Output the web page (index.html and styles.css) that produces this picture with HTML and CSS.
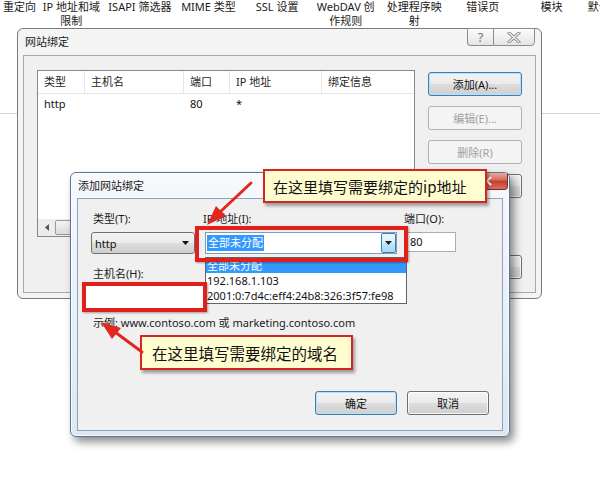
FILE: index.html
```html
<!DOCTYPE html>
<html lang="zh-CN">
<head>
<meta charset="utf-8">
<title>网站绑定</title>
<link rel="stylesheet" href="styles.css">
</head>
<body>
<div class="toolbar">
  <div class="tb tb-first">重定向</div>
  <div class="tb">IP 地址和域<br>限制</div>
  <div class="tb">ISAPI 筛选器</div>
  <div class="tb">MIME 类型</div>
  <div class="tb">SSL 设置</div>
  <div class="tb">WebDAV 创<br>作规则</div>
  <div class="tb">处理程序映<br>射</div>
  <div class="tb">错误页</div>
  <div class="tb">模块</div>
  <div class="tb tb-last">默认文档</div>
</div>
<div class="rule"></div>

<div class="win1">
  <div class="win1-bar">
    <div class="win-title">网站绑定</div>
    <div class="capbtns">
      <div class="cap cap-help">?</div>
      <div class="cap cap-close">
        <svg width="14" height="11" viewBox="0 0 14 11"><path d="M2 1 L12 10 M12 1 L2 10" stroke="#7b7b7b" stroke-width="3" stroke-linecap="round"/><path d="M2 1 L12 10 M12 1 L2 10" stroke="#fafafa" stroke-width="1.2" stroke-linecap="round"/></svg>
      </div>
    </div>
  </div>
  <div class="win1-client">
    <div class="listview">
      <div class="lv-head">
        <div class="c1">类型</div><div class="c2">主机名</div><div class="c3">端口</div><div class="c4">IP 地址</div><div class="c5">绑定信息</div>
      </div>
      <div class="lv-row">
        <div class="c1">http</div><div class="c2"></div><div class="c3">80</div><div class="c4">*</div><div class="c5"></div>
      </div>
      <div class="lv-spacer"></div>
      <div class="hscroll">
        <div class="hs-btn"><svg width="4" height="7" viewBox="0 0 4 7"><path d="M4 0 L0 3.5 L4 7 Z" fill="#555"/></svg></div>
        <div class="hs-thumb"></div>
      </div>
    </div>
    <div class="btncol">
      <div class="btn btn-default">添加(A)...</div>
      <div class="btn btn-disabled">编辑(E)...</div>
      <div class="btn btn-disabled">删除(R)</div>
      <div class="btn"></div>
      <div class="btn btn-bottom"></div>
    </div>
  </div>
</div>

<div class="win2">
  <div class="win2-bar">
    <div class="win-title">添加网站绑定</div>
    <div class="close-red">
      <svg width="12" height="10" viewBox="0 0 12 10"><path d="M2 1 L10 9 M10 1 L2 9" stroke="#fff" stroke-width="2"/></svg>
    </div>
  </div>
  <div class="win2-client">
    <div class="row1">
      <div class="fg fg1">
        <div class="lbl lbl-in">类型(T):</div>
        <div class="combo">http
          <svg class="caret" width="7" height="4" viewBox="0 0 7 4"><path d="M0 0 H7 L3.5 4 Z" fill="#111"/></svg>
        </div>
      </div>
      <div class="fg fg2">
        <div class="lbl">IP 地址(I):</div>
        <div class="ip-combo"><span class="sel-text">全部未分配</span>
          <div class="dd-btn"><svg width="7" height="4" viewBox="0 0 7 4"><path d="M0 0 H7 L3.5 4 Z" fill="#222"/></svg></div>
        </div>
      </div>
      <div class="fg fg3">
        <div class="lbl">端口(O):</div>
        <div class="port">80</div>
      </div>
    </div>
    <div class="lbl-host">主机名(H):</div>
    <div class="host-input"></div>
    <div class="example">示例: www.contoso.com 或 marketing.contoso.com</div>
    <div class="okrow">
      <div class="btn btn-default btn-dlg">确定</div>
      <div class="btn btn-dlg">取消</div>
    </div>
  </div>
</div>

<div class="dropdown">
  <div class="dd-item dd-hi">全部未分配</div>
  <div class="dd-item">192.168.1.103</div>
  <div class="dd-item">2001:0:7d4c:eff4:24b8:326:3f57:fe98</div>
</div>

<div class="redbox rb-ip"></div>
<div class="redbox rb-host"></div>

<div class="callout co-ip">在这里填写需要绑定的ip地址</div>
<div class="callout co-host">在这里填写需要绑定的域名</div>

<svg class="arrows" width="600" height="482" viewBox="0 0 600 482">
  <line x1="251" y1="183" x2="219" y2="213" stroke="#e0281f" stroke-width="3" stroke-linecap="round"/>
  <polygon points="207,225 226,216 216,206" fill="#e0281f"/>
  <line x1="142" y1="352" x2="115" y2="332" stroke="#e0281f" stroke-width="3" stroke-linecap="round"/>
  <polygon points="101,322 121,328 112,339" fill="#e0281f"/>
</svg>
</body>
</html>
```

FILE: styles.css
```css
* { box-sizing: border-box; }

body {
  margin: 0;
  width: 600px;
  height: 482px;
  overflow: hidden;
  position: relative;
  background: #fff;
  font-family: "Noto Sans", "Noto Sans CJK SC", sans-serif;
  font-size: 11px;
  color: #111;
}

/* top feature strip */
.toolbar { display: flex; height: 28px; overflow: hidden; }
.tb {
  flex: 0 0 68.6px;
  text-align: center;
  line-height: 14px;
  white-space: nowrap;
  color: #1a1a1a;
}
.tb-first { flex-basis: 37px; text-align: left; padding-left: 3px; }
.tb-last { flex-basis: 40px; text-align: left; padding-left: 2px; }
.rule { margin-top: 85px; height: 1px; background: #cad5e1; }

/* dialog 1 */
.win1 {
  position: absolute;
  left: 17px; top: 28px;
  width: 525px; height: 271px;
  border: 1px solid #7a7a7a;
  border-radius: 6px;
  background: #f4f4f4;
  display: flex;
  flex-direction: column;
}
.win1-bar { display: flex; height: 26px; align-items: flex-start; }
.win-title { flex: 1; padding-left: 7px; line-height: 26px; color: #1a1a1a; }
.capbtns { display: flex; margin-top: -1px; margin-right: 6px; }
.cap {
  height: 18px;
  border: 1px solid #8c8c8c;
  background: linear-gradient(#fdfdfd, #e4e4e4);
  display: flex; align-items: center; justify-content: center;
  color: #777;
  font-size: 13px;
  line-height: 1;
}
.cap-help { width: 26px; border-right: none; border-radius: 0 0 0 4px; }
.cap-close { width: 42px; border-radius: 0 0 4px 0; }

.win1-client {
  margin: 0 5px;
  height: 238px;
  border: 1px solid #a8a8a8;
  background: #f0f0f0;
  display: flex;
  gap: 13px;
  padding: 14px 13px 13px 13px;
}
.listview {
  flex: 0 0 378px;
  height: 167px;
  border: 1px solid #828790;
  background: #fff;
  display: flex;
  flex-direction: column;
}
.lv-head { display: flex; height: 23px; border-bottom: 1px solid #e5e5e5; }
.lv-head > div { border-right: 1px solid #e5e5e5; padding-left: 6px; line-height: 22px; color: #1f1f1f; }
.lv-head > .c5 { border-right: none; }
.lv-row { display: flex; height: 17px; margin-top: 1px; line-height: 17px; }
.lv-row > div { padding-left: 6px; }
.c1 { width: 47px; } .c2 { width: 99px; } .c3 { width: 46px; } .c4 { width: 92px; } .c5 { flex: 1; }
.lv-spacer { flex: 1; }
.hscroll { height: 17px; display: flex; background: #ececec; }
.hs-btn { width: 17px; display: flex; align-items: center; justify-content: center; }
.hs-thumb {
  width: 170px;
  margin: 1px 0;
  border: 1px solid #999;
  border-radius: 2px;
  background: linear-gradient(#f5f5f5, #dcdcdc);
}

.btncol { display: flex; flex-direction: column; gap: 10px; padding-top: 2px; flex: 0 0 94px; }
.btn {
  height: 24px;
  border: 1px solid #707070;
  border-radius: 3px;
  background: linear-gradient(#f3f3f3 0%, #ebebeb 49%, #dddddd 50%, #cfcfcf 100%);
  box-shadow: inset 0 0 0 1px rgba(255,255,255,0.75);
  display: flex; align-items: center; justify-content: center;
  color: #111;
  line-height: 1;
}
.btn-default {
  border-color: #3c7fb1;
  box-shadow: inset 0 0 0 1px #b7e0f6;
}
.btn-disabled {
  border-color: #adb2b5;
  background: #f4f4f4;
  box-shadow: none;
  color: #a0a0a0;
}
.btn-bottom { margin-top: auto; }

/* dialog 2 */
.win2 {
  position: absolute;
  left: 70px; top: 172px;
  width: 440px; height: 265px;
  border: 1px solid #5b7597;
  border-radius: 6px;
  background: linear-gradient(#f7f9fc, #dde7f2);
  box-shadow: 4px 5px 8px rgba(0,0,0,0.45), inset 0 0 0 1px rgba(255,255,255,0.8);
  display: flex;
  flex-direction: column;
}
.win2-bar { display: flex; height: 25px; align-items: flex-start; }
.win2-bar .win-title { line-height: 25px; }
.close-red {
  width: 43px; height: 17px;
  margin-right: 1px;
  border: 1px solid #7a2b22;
  border-top: none;
  border-radius: 0 0 4px 4px;
  background: linear-gradient(#eaa99a 0%, #d66a58 45%, #c13d28 50%, #d8705f 100%);
  display: flex; align-items: center; justify-content: center;
}
.win2-client {
  margin: 0 6px;
  height: 233px;
  border: 1px solid #8ea2ba;
  background: #f0f0f0;
  padding: 12px 13px 15px 13px;
  display: flex;
  flex-direction: column;
}
.row1 { display: flex; }
.fg { display: flex; flex-direction: column; }
.fg1 { width: 104px; }
.fg2 { margin-left: 8px; width: 194px; }
.fg3 { margin-left: 7px; }
.lbl { height: 16px; line-height: 16px; margin-bottom: 5px; white-space: nowrap; color: #1a1a1a; }
.lbl-in { padding-left: 2px; }
.combo {
  height: 22px;
  border: 1px solid #707070;
  border-radius: 3px;
  background: linear-gradient(#f3f3f3, #ebebeb 49%, #dddddd 50%, #cfcfcf);
  display: flex; align-items: center;
  padding: 0 5px 0 3px;
}
.caret { margin-left: auto; }
.ip-combo {
  margin-left: 2px;
  width: 192px; height: 22px;
  border: 1px solid #7f9db9;
  background: #fff;
  display: flex; align-items: center;
  padding: 0 0 0 1px;
}
.sel-text { background: #3399ff; color: #fff; line-height: 16px; padding: 0 1px; }
.dd-btn {
  margin-left: auto;
  width: 15px; height: 20px;
  border: 1px solid #3c7fb1;
  border-radius: 2px;
  background: linear-gradient(#eaf6fd, #d9f0fc 49%, #bee6fd 50%, #a7d9f5);
  display: flex; align-items: center; justify-content: center;
}
.port {
  margin-left: 3px;
  width: 49px; height: 20px;
  border: 1px solid #abadb3;
  background: #fff;
  padding-left: 2px;
  line-height: 18px;
}
.lbl-host { margin-top: 12px; padding-left: 2px; line-height: 16px; height: 16px; color: #1a1a1a; }
.host-input {
  margin-top: 2px;
  margin-left: -6px;
  width: 120px; height: 26px;
  border: 1px solid #abadb3;
  background: #fff;
}
.example { margin-top: 5px; padding-left: 2px; line-height: 16px; color: #1a1a1a; }
.okrow { margin-top: auto; display: flex; justify-content: flex-end; gap: 10px; }
.btn-dlg { width: 82px; }

/* dropdown list */
.dropdown {
  position: absolute;
  left: 205px; top: 257px;
  width: 202px; height: 47px;
  border: 1px solid #646464;
  background: #fff;
}
.dd-item { height: 15px; line-height: 15px; padding-left: 1px; white-space: nowrap; color: #111; }
.dd-hi { background: #3399ff; color: #fff; }

/* annotations */
.redbox {
  position: absolute;
  border: 4px solid #e2201b;
  box-shadow: 1px 1px 2px rgba(0,0,0,0.35);
}
.rb-ip { left: 195px; top: 226px; width: 213px; height: 36px; }
.rb-host { left: 82px; top: 282px; width: 125px; height: 30px; }

.callout {
  position: absolute;
  border: 2px solid #d42424;
  background: #fefdd0;
  box-shadow: 2px 3px 3px rgba(0,0,0,0.35);
  font-family: "Noto Sans CJK SC", sans-serif;
  font-size: 15.5px;
  color: #111;
  display: flex; align-items: center;
  white-space: nowrap;
}
.co-ip { left: 263px; top: 169px; width: 224px; height: 34px; padding-left: 8px; font-size: 15px; }
.co-host { left: 140px; top: 335px; width: 213px; height: 35px; padding-left: 10px; }

.arrows { position: absolute; left: 0; top: 0; pointer-events: none; }
```
